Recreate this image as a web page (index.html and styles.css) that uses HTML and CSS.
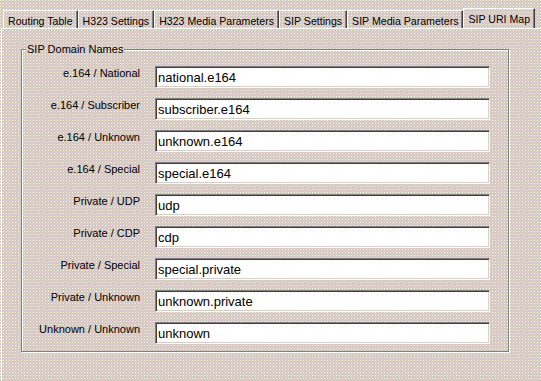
FILE: index.html
```html
<!DOCTYPE html>
<html lang="en">
<head>
  <meta charset="UTF-8" />
  <title>SIP URI Map</title>
  <link rel="stylesheet" href="styles.css">
</head>
<body>

  <div class="tabs">
    <div class="tab">Routing Table</div>
    <div class="tab">H323 Settings</div>
    <div class="tab">H323 Media Parameters</div>
    <div class="tab">SIP Settings</div>
    <div class="tab">SIP Media Parameters</div>
    <div class="tab tab--active">SIP URI Map</div>
  </div>

  <div class="panel">
    <fieldset class="group">
      <legend>SIP Domain Names</legend>
      <div class="fields">
        <label class="field-label" for="natl">e.164 / National</label>
        <input class="field-input" id="natl" value="national.e164">

        <label class="field-label" for="subs">e.164 / Subscriber</label>
        <input class="field-input" id="subs" value="subscriber.e164">

        <label class="field-label" for="unk164">e.164 / Unknown</label>
        <input class="field-input" id="unk164" value="unknown.e164">

        <label class="field-label" for="spec164">e.164 / Special</label>
        <input class="field-input" id="spec164" value="special.e164">

        <label class="field-label" for="udp">Private / UDP</label>
        <input class="field-input" id="udp" value="udp">

        <label class="field-label" for="cdp">Private / CDP</label>
        <input class="field-input" id="cdp" value="cdp">

        <label class="field-label" for="specpriv">Private / Special</label>
        <input class="field-input" id="specpriv" value="special.private">

        <label class="field-label" for="unkpriv">Private / Unknown</label>
        <input class="field-input" id="unkpriv" value="unknown.private">

        <label class="field-label" for="unkunk">Unknown / Unknown</label>
        <input class="field-input" id="unkunk" value="unknown">
      </div>
    </fieldset>
  </div>

</body>
</html>
```

FILE: styles.css
```css
/* dithered dialog background: yellow + pink specks on grey, 3px tile */
body, .tab--active, .group legend {
  background-color: #cdc9c5;
  background-image:
    conic-gradient(at 1px 1px, transparent 75%, #fcfcc8 0),
    conic-gradient(at 1px 1px, transparent 75%, #f4c8d0 0),
    conic-gradient(at 1px 1px, transparent 75%, #f4c8d0 0);
  background-size: 3px 3px;
  background-position: 0 0, 2px 1px, 1px 2px;
  background-attachment: fixed;
}
body {
  margin: 0; height: 381px; overflow: hidden;
  font-family: "Liberation Sans", Arial, sans-serif;
  font-size: 11px; color: #000;
}

.tabs {
  display: flex; padding: 10px 0 0 3px;
  position: relative; z-index: 1;
  height: 18px;
}
.tab {
  padding: 4px 4px 0; line-height: 13px;
  font-size: 10.6px;
  border-top: 1px solid #fff; border-left: 1px solid #fff;
  border-right: 1px solid #404040;
  box-shadow: inset -1px 0 #808080;
  white-space: nowrap;
}
.tab--active {
  margin-top: -2px; padding: 4px 4px 3px;
}

.panel {
  margin-left: 1px; margin-right: -20px;
  height: 360px;
  border-top: 1px solid #fff; border-left: 1px solid #fff;
}

.group {
  margin: 14px 0 0 19px; padding: 10px 0 7px;
  width: 488px; box-sizing: border-box;
  border: 1px solid #808080;
  box-shadow: inset 1px 1px #fff, 1px 1px #fff;
  min-inline-size: 0;
}
.group legend {
  margin-left: 4px; padding: 0 1px;
  line-height: 13px;
}

.fields {
  display: grid;
  grid-template-columns: 118px 335px;
  column-gap: 15px; row-gap: 10px;
}
.field-label {
  text-align: right; line-height: 13px;
  padding-top: 1px; white-space: nowrap;
}
.field-input {
  height: 22px; box-sizing: border-box;
  margin: 0; padding: 0 0 0 2px;
  border: 1px solid; border-color: #808080 #fff #fff #808080;
  box-shadow: inset 1px 1px #404040, inset -1px -1px #d4d0c8;
  background: #fff; outline: none;
  font-family: "Liberation Sans", Arial, sans-serif;
  font-size: 13px; color: #000;
}
```
